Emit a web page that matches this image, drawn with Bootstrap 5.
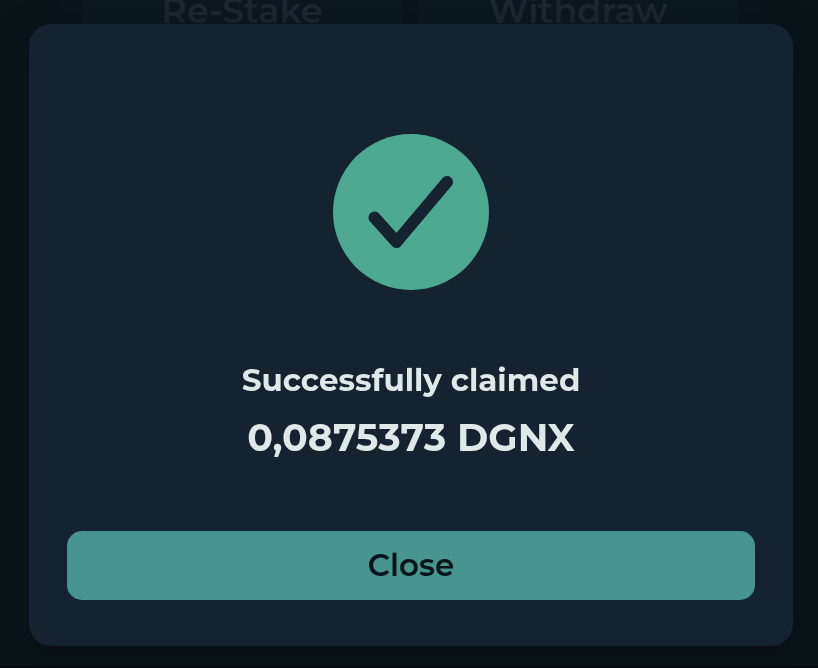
<!DOCTYPE html>
<html lang="en">
<head>
<meta charset="utf-8">
<meta name="viewport" content="width=device-width, initial-scale=1">
<title>Claim rewards</title>
<link href="https://cdn.jsdelivr.net/npm/bootstrap@5.3.0/dist/css/bootstrap.min.css" rel="stylesheet">
<style>
body { font-family: Montserrat, Inter, sans-serif; background: #091418; color: #dfeae8; }
.stake-page { padding-left: 2px; border-bottom: 2px solid #060b10; }
.stake-panel { max-width: 704px; margin-top: -24px; padding: 0 24px; background: #0a141c; }
.stake-action, .stake-action:disabled { height: 92px; padding: 0 0 22px; border: 0; border-radius: 16px; background: #0b181f; color: #1e272f; font-size: 35px; font-weight: 600; line-height: 48px; opacity: 1; }
.claim-modal { padding: 24px 25px 0 29px; overflow: hidden; }
.claim-modal .modal-dialog { max-width: 764px; margin: 0 auto; }
.claim-modal .modal-content { padding: 110px 38px 46px; border: 0; border-radius: 22px; background: #15222f; color: #dfeae8; box-shadow: 0 10px 30px rgba(9, 14, 22, .7); }
.claim-icon { width: 156px; height: 156px; margin-bottom: 70px; }
.claim-title { font-size: 31px; line-height: 40px; font-weight: 700; margin-bottom: 14px; }
.claim-amount { font-size: 38px; line-height: 48px; font-weight: 700; margin-bottom: 69px; }
.claim-close, .claim-close:hover { height: 69px; border: 0; border-radius: 15px; background: #46958e; color: #09131b; font-size: 31px; font-weight: 600; }
</style>
</head>
<body>
<main class="stake-page min-vh-100 overflow-hidden">
  <div class="stake-panel mx-auto d-flex gap-3">
    <button type="button" class="btn stake-action flex-fill w-50" disabled>Re-Stake</button>
    <button type="button" class="btn stake-action flex-fill w-50" disabled>Withdraw</button>
  </div>
</main>
<div class="modal d-block claim-modal" role="dialog" aria-modal="true" aria-labelledby="claim-title">
  <div class="modal-dialog">
    <div class="modal-content text-center">
      <svg class="claim-icon mx-auto" viewBox="0 0 156 156" aria-hidden="true">
        <circle cx="78" cy="78" r="78" fill="#4da98f"/>
        <path d="M41.5 83.5 63.5 108 114 48" fill="none" stroke="#15222f" stroke-width="12" stroke-linecap="round" stroke-linejoin="round"/>
      </svg>
      <h1 class="claim-title" id="claim-title">Successfully claimed</h1>
      <p class="claim-amount">0,0875373 DGNX</p>
      <button type="button" class="btn claim-close w-100">Close</button>
    </div>
  </div>
</div>
<script src="https://cdn.jsdelivr.net/npm/bootstrap@5.3.0/dist/js/bootstrap.bundle.min.js"></script>
</body>
</html>
